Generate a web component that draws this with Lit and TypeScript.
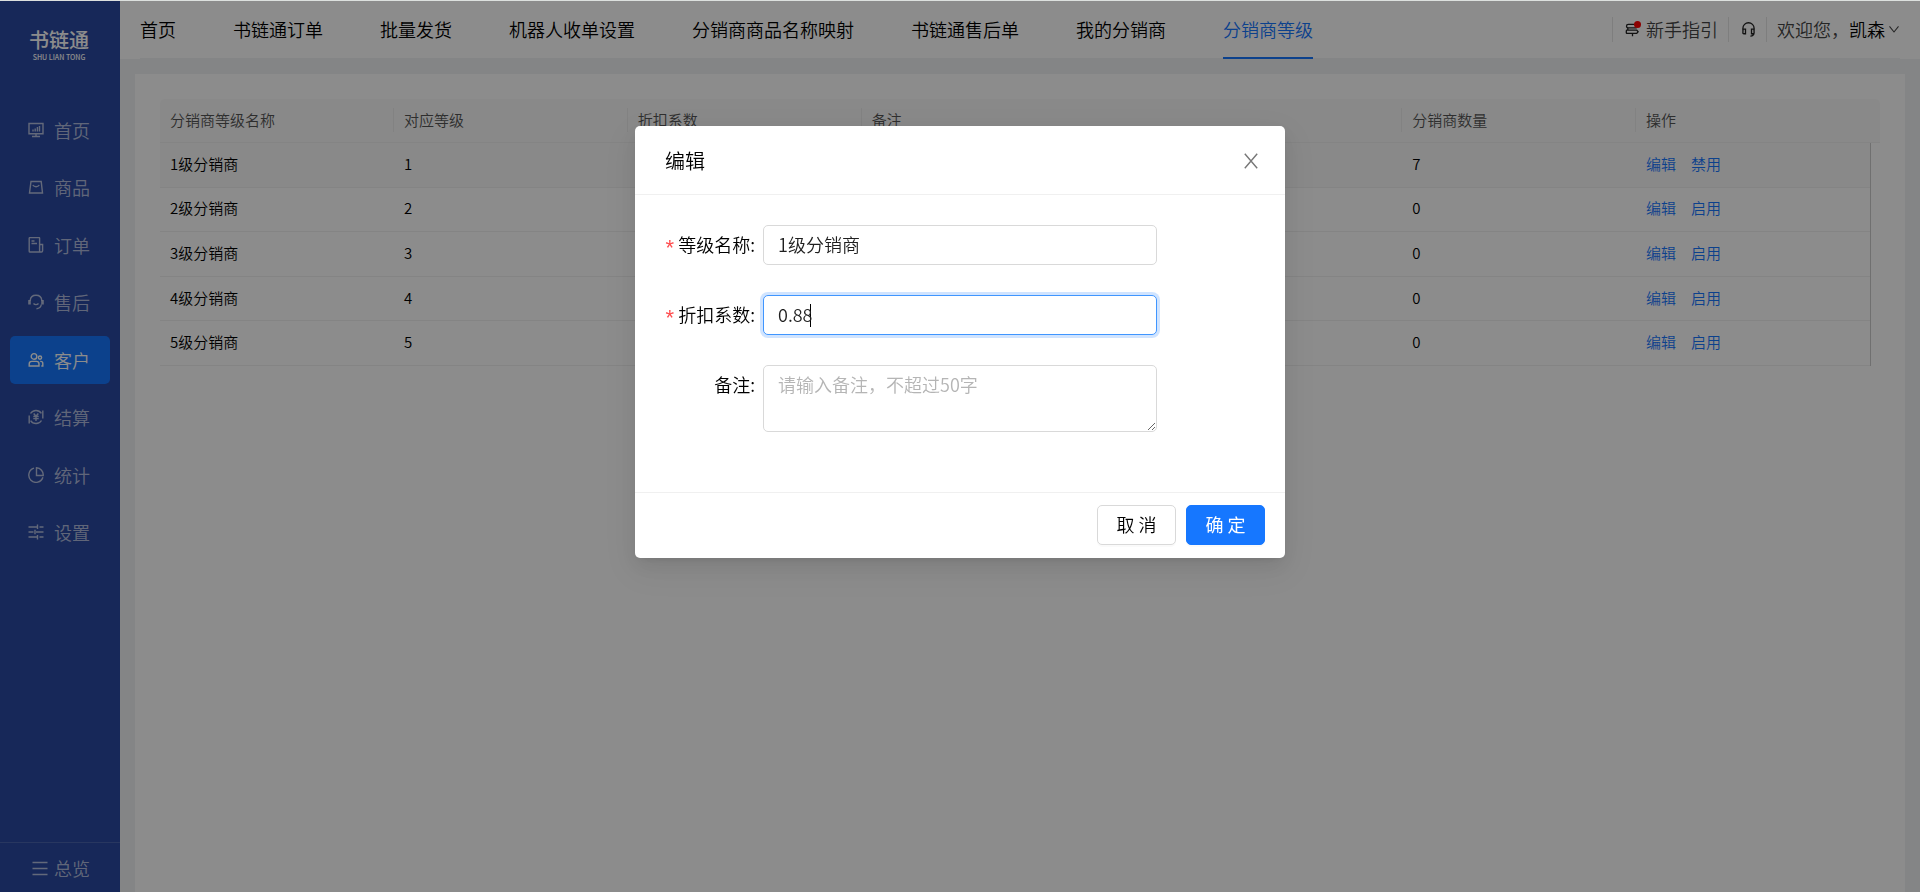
import { LitElement, html, css, svg, TemplateResult, SVGTemplateResult } from "lit";
import { customElement, property, state } from "lit/decorators.js";
import { classMap } from "lit/directives/class-map.js";

const glyphs: Record<string, SVGTemplateResult> = {
  home: svg`<path d="M1 1.500h14v10.300H1zM8 12v2.500M4 14.500h8M5 9.500V7.500M7.200 9.500V6.500M9.400 9.500V5M11.500 9.500V4"/>`,
  goods: svg`<path d="M3 2.500h10.200l1.300 11.500H1.500zM4.800 6c1.500 2.400 5 2.400 6.500 0"/>`,
  order: svg`<path d="M11.500 15H2a.800.800 0 0 1-.800-.800V1.300C1.200.900 1.500.600 2 .600h9c.400 0 .600.300.600.700V15zM11.600 7.500h3v6.300c0 .700-.500 1.200-1.200 1.200h-2M3.500 4h3M3.500 6.500h5.500"/>`,
  service: svg`<path d="M2.200 6.500C2.500 3 5 1.200 8 1.200S13.500 3 13.800 6.500M13.300 10.500c-.400 2.600-2.300 4-4.800 4.300M5.500 9.500c1.300 1.300 3.700 1.300 5 0"/><path d="M1.500 6v4.500M14.500 6v4.500" stroke-width="2.600"/>`,
  customer: svg`<circle cx="6" cy="4.400" r="2.800"/><path d="M1.200 14v-2c0-1.700 1.200-2.600 2.600-2.600h4.600c1.500 0 2.600.900 2.600 2.600v2z"/><circle cx="12" cy="5.600" r="1.600"/><path d="M12.200 9.400h.600c1.200 0 2 .800 2 2V14h-1.500"/>`,
  settle: svg`<path d="M2.500 4.500a6.500 6.500 0 0 1 10.900-.200M13.500 11.500a6.500 6.500 0 0 1-10.900.200M1.200 6.500v8M14.800 1.500v8M5.700 4.500 8 7.300l2.300-2.800M8 7.300V12M5.300 7.500h5.400M5.300 9.600h5.400"/>`,
  stats: svg`<path d="M6 1.200a7.200 7.200 0 1 0 8.900 9M8.500.800v7.700h6.700A7 7 0 0 0 8.500.800z"/>`,
  config: svg`<path d="M.500 3h8.500M11.500 3h4M9.500.500v4.500M.500 8h5M8 8h7.500M7 5.800v4.400M.500 13h8.500M11.500 13h4M9.500 11v4.500"/>`,
  menu: svg`<path d="M.500 2.500h15M.500 8.500h15M.500 14.500h15"/>`,
  guide: svg`<path d="M11.500 2.500H3.500a1.800 1.800 0 0 0 0 3.800h9M3 6.300v2.400M2.200 8.700h10.300l1.500 1.700-1.500 1.800H2.200a.800.800 0 0 1-.800-.800V9.500c0-.500.300-.800.800-.800M8 12.200v3"/>`,
  headset: svg`<path d="M2 9V6.800a6 6 0 0 1 12 0V9M14 11c0 2.500-1.500 4-4 4M2.200 7.500h2.600v5H3c-.600 0-1-.400-1-1zM13.800 7.500h-2.600v5H13c.600 0 1-.400 1-1z"/>`,
  down: svg`<path d="M2 4.500 8 12l6-7.500"/>`,
  close: svg`<path d="M1.800.700 14.200 15.300M14.200.700 1.800 15.300"/>`,
};

@customElement("line-icon")
class LineIcon extends LitElement {
  @property() name = "home";
  static styles = css`
    :host {
      display: block;
      flex: none;
      width: 16px;
      height: 16px;
    }
    .glyph {
      display: block;
      width: 100%;
      height: 100%;
      fill: none;
      stroke: currentColor;
      stroke-width: 1.4;
    }
  `;
  render() {
    return html`<svg class="glyph" viewBox="0 0 16 16" aria-hidden="true">${glyphs[this.name]}</svg>`;
  }
}

interface Level {
  name: string;
  level: number;
  count: number;
  enabled: boolean;
}

@customElement("app-root")
class AppRoot extends LitElement {
  @state() private open = true;
  @state() private levels: Level[] = [
    { name: "1级分销商", level: 1, count: 7, enabled: true },
    { name: "2级分销商", level: 2, count: 0, enabled: false },
    { name: "3级分销商", level: 3, count: 0, enabled: false },
    { name: "4级分销商", level: 4, count: 0, enabled: false },
    { name: "5级分销商", level: 5, count: 0, enabled: false },
  ];

  private menu = [
    ["home", "首页"],
    ["goods", "商品"],
    ["order", "订单"],
    ["service", "售后"],
    ["customer", "客户"],
    ["settle", "结算"],
    ["stats", "统计"],
    ["config", "设置"],
  ];

  private tabs = [
    "首页",
    "书链通订单",
    "批量发货",
    "机器人收单设置",
    "分销商商品名称映射",
    "书链通售后单",
    "我的分销商",
    "分销商等级",
  ];

  static styles = css`
    :host {
      display: block;
      font-family: "Noto Sans CJK SC", "Noto Sans", sans-serif;
      font-size: 18px;
      font-weight: 350;
      line-height: 28px;
      color: #1f1f1f;
    }
    * {
      box-sizing: border-box;
    }
    a {
      color: inherit;
      text-decoration: none;
    }
    .app {
      display: flex;
      min-height: 100vh;
      border-top: 1px solid #dce0de;
      background: #f0f2f5;
    }

    .side {
      display: flex;
      flex-direction: column;
      flex: none;
      width: 120px;
      background: #2b4aa3;
      color: rgba(255, 255, 255, 0.65);
    }
    .logo {
      display: flex;
      flex-direction: column;
      align-items: center;
      padding: 27px 2px 43px 0;
      color: #fff;
    }
    .brand {
      font-size: 20px;
      font-weight: 500;
      line-height: 24px;
    }
    .latin {
      font-size: 7px;
      font-weight: 500;
      line-height: 11px;
      white-space: nowrap;
    }
    .menu {
      display: flex;
      flex-direction: column;
      justify-content: space-between;
      min-height: 451px;
      margin: 0;
      padding: 0 10px;
      list-style: none;
    }
    .item {
      display: flex;
      align-items: center;
      gap: 10px;
      height: 48px;
      padding: 0 0 1px 18px;
      border-radius: 5px;
    }
    .item.on {
      background: #1677ff;
      color: #fff;
    }
    .overview {
      display: flex;
      align-items: center;
      gap: 6px;
      margin-top: auto;
      height: 50px;
      padding-left: 32px;
      border-top: 1px solid rgba(255, 255, 255, 0.15);
    }

    .main {
      display: flex;
      flex-direction: column;
      flex: 1;
      min-width: 0;
    }
    .top {
      padding: 0 20px;
      background: #fff;
    }
    .bar {
      display: flex;
      align-items: stretch;
      justify-content: space-between;
      height: 58px;
      border-bottom: 1px solid #f0f2f5;
      white-space: nowrap;
      color: #000;
    }
    .tabs {
      display: flex;
      gap: 57px;
    }
    .tab {
      margin-bottom: -1px;
      padding-top: 14px;
      border-bottom: 2px solid transparent;
    }
    .tab.on {
      border-color: #1677ff;
      color: #1677ff;
    }
    .tools {
      display: flex;
      align-items: center;
      padding-bottom: 1px;
    }
    .tool {
      display: flex;
      align-items: center;
      height: 25px;
      padding: 0 10px 0 12px;
      border-left: 1px solid #e6e6e6;
      color: #444;
    }
    .tool.user {
      padding: 0 0 0 10px;
      gap: 3px;
    }
    .guide {
      position: relative;
      margin-right: 6px;
    }
    .dot {
      position: absolute;
      top: -1px;
      right: -1px;
      width: 7px;
      height: 7px;
      border-radius: 50%;
      background: #f00;
    }
    .who {
      color: #000;
    }
    .small {
      width: 12px;
      height: 12px;
    }
    .dark {
      width: 15px;
      height: 15px;
      color: #222;
    }

    .card {
      flex: 1;
      margin: 15px 15px 0;
      padding: 25px;
      background: #fff;
    }
    .table {
      width: 100%;
      height: 267px;
      border-spacing: 0;
      table-layout: fixed;
      font-size: 15px;
      line-height: 24px;
      text-align: left;
      color: #000;
    }
    .table th,
    .table td {
      padding: 0 10px 2px;
      border-bottom: 1px solid #f0f0f0;
      font-weight: 350;
    }
    .table th {
      height: 44px;
      background: #fafafa;
      color: #555;
    }
    .table th:first-child {
      border-top-left-radius: 5px;
    }
    .table th:last-child {
      border-top-right-radius: 5px;
    }
    .col {
      width: 13.6%;
    }
    .table .gutter {
      width: 10px;
      padding: 0;
    }
    .cut {
      display: block;
      margin-left: -11px;
      padding-left: 10px;
      border-left: 1px solid #ededed;
    }
    .table .edge {
      padding: 0;
      border-bottom: 0;
      border-left: 1px solid #ccc;
    }
    .hover td:not(.edge) {
      background: #fafafa;
    }
    .ops {
      display: flex;
      gap: 15px;
      color: #1677ff;
    }

    .mask {
      position: fixed;
      inset: 1px 0 0;
      background: rgba(0, 0, 0, 0.45);
    }
    .modal {
      width: 650px;
      max-width: 100%;
      margin: 125px auto 0;
      border-radius: 5px;
      background: #fff;
      box-shadow:
        0 4px 8px -5px rgba(0, 0, 0, 0.12),
        0 8px 20px rgba(0, 0, 0, 0.08),
        0 11px 35px 10px rgba(0, 0, 0, 0.05);
    }
    .head {
      display: flex;
      align-items: center;
      justify-content: space-between;
      height: 69px;
      padding: 2px 26px 0 30px;
      border-bottom: 1px solid #f0f0f0;
    }
    .title {
      margin: 0;
      font-size: 20px;
      font-weight: 350;
      color: #000;
    }
    .close {
      padding: 0;
      border: 0;
      background: none;
      color: #777;
    }
    .form {
      display: grid;
      grid-template-columns: 98px minmax(0, 394px);
      row-gap: 30px;
      padding: 30px 30px 60px;
    }
    .label {
      display: flex;
      justify-self: end;
      height: 40px;
      padding-right: 8px;
      line-height: 38px;
      white-space: nowrap;
      color: #000;
    }
    .must::before {
      content: "*";
      margin-right: 4px;
      padding-top: 4px;
      font-family: "Liberation Sans", sans-serif;
      font-size: 22px;
      color: #ff4d4f;
    }
    .box {
      display: block;
      width: 100%;
      height: 40px;
      padding: 0 14px 2px;
      border: 1px solid #d9d9d9;
      border-radius: 5px;
      outline: none;
      background: #fff;
      font: inherit;
      color: inherit;
    }
    .box::placeholder {
      color: #b5b5b5;
    }
    .box.active {
      border-color: #4096ff;
      box-shadow: 0 0 0 3px rgba(22, 119, 255, 0.2);
      caret-color: transparent;
      background: linear-gradient(#000, #000) 46px center / 1px 23px no-repeat #fff;
    }
    .box.area {
      height: 67px;
      padding: 4px 14px;
      resize: vertical;
    }
    .foot {
      display: flex;
      justify-content: flex-end;
      gap: 10px;
      padding: 12px 20px 13px;
      border-top: 1px solid #f0f0f0;
    }
    .btn {
      width: 79px;
      height: 40px;
      padding: 0 0 2px;
      border: 1px solid #d9d9d9;
      border-radius: 5px;
      background: #fff;
      box-shadow: 0 2px 0 rgba(0, 0, 0, 0.02);
      font: inherit;
      color: #000;
    }
    .btn.primary {
      border-color: #1677ff;
      background: #1677ff;
      color: #fff;
      font-weight: 400;
    }
  `;

  private close = () => {
    this.open = false;
  };

  private toggle(row: Level, e: Event) {
    e.preventDefault();
    this.levels = this.levels.map((l) => (l === row ? { ...l, enabled: !l.enabled } : l));
  }

  private edit(e: Event) {
    e.preventDefault();
    this.open = true;
  }

  private renderSide(): TemplateResult {
    return html`<aside class="side">
      <div class="logo"><span class="brand">书链通</span><span class="latin">SHU LIAN TONG</span></div>
      <ul class="menu">
        ${this.menu.map(
          ([icon, text]) => html`<li>
            <a href="#" class=${classMap({ item: true, on: icon === "customer" })}>
              <line-icon name=${icon}></line-icon>${text}
            </a>
          </li>`
        )}
      </ul>
      <a class="overview" href="#"><line-icon name="menu"></line-icon>总览</a>
    </aside>`;
  }

  private renderTop(): TemplateResult {
    return html`<header class="top">
      <div class="bar">
        <nav class="tabs">
          ${this.tabs.map(
            (t) => html`<a href="#" class=${classMap({ tab: true, on: t === "分销商等级" })}>${t}</a>`
          )}
        </nav>
        <div class="tools">
          <a class="tool" href="#">
            <span class="guide"><line-icon class="dark" name="guide"></line-icon><i class="dot"></i></span>新手指引
          </a>
          <a class="tool" href="#"><line-icon class="dark" name="headset"></line-icon></a>
          <a class="tool user" href="#">
            <span>欢迎您，<span class="who">凯森</span></span>
            <line-icon class="small" name="down"></line-icon>
          </a>
        </div>
      </div>
    </header>`;
  }

  private renderTable(): TemplateResult {
    return html`<table class="table">
      <thead>
        <tr>
          <th class="col">分销商等级名称</th>
          <th class="col"><span class="cut">对应等级</span></th>
          <th class="col"><span class="cut">折扣系数</span></th>
          <th><span class="cut">备注</span></th>
          <th class="col"><span class="cut">分销商数量</span></th>
          <th class="col"><span class="cut">操作</span></th>
          <th class="gutter"></th>
        </tr>
      </thead>
      <tbody>
        ${this.levels.map(
          (l, i) => html`<tr class=${classMap({ hover: i === 0 })}>
            <td>${l.name}</td>
            <td>${l.level}</td>
            <td></td>
            <td></td>
            <td>${l.count}</td>
            <td>
              <div class="ops">
                <a href="#" @click=${this.edit}>编辑</a>
                <a href="#" @click=${(e: Event) => this.toggle(l, e)}>${l.enabled ? "禁用" : "启用"}</a>
              </div>
            </td>
            <td class="edge"></td>
          </tr>`
        )}
      </tbody>
    </table>`;
  }

  private renderModal(): TemplateResult {
    return html`<div class="mask">
      <section class="modal" role="dialog" aria-modal="true" aria-labelledby="title">
        <div class="head">
          <h2 class="title" id="title">编辑</h2>
          <button class="close" type="button" aria-label="关闭" @click=${this.close}>
            <line-icon name="close"></line-icon>
          </button>
        </div>
        <div class="form">
          <label class="label must" for="name">等级名称:</label>
          <input class="box" id="name" .value=${"1级分销商"} />
          <label class="label must" for="rate">折扣系数:</label>
          <input class="box active" id="rate" .value=${"0.88"} />
          <label class="label" for="note">备注:</label>
          <textarea class="box area" id="note" placeholder="请输入备注，不超过50字"></textarea>
        </div>
        <div class="foot">
          <button class="btn" type="button" @click=${this.close}>取 消</button>
          <button class="btn primary" type="button" @click=${this.close}>确 定</button>
        </div>
      </section>
    </div>`;
  }

  render() {
    return html`<div class="app">
        ${this.renderSide()}
        <div class="main">
          ${this.renderTop()}
          <main class="card">${this.renderTable()}</main>
        </div>
      </div>
      ${this.open ? this.renderModal() : null}`;
  }
}
